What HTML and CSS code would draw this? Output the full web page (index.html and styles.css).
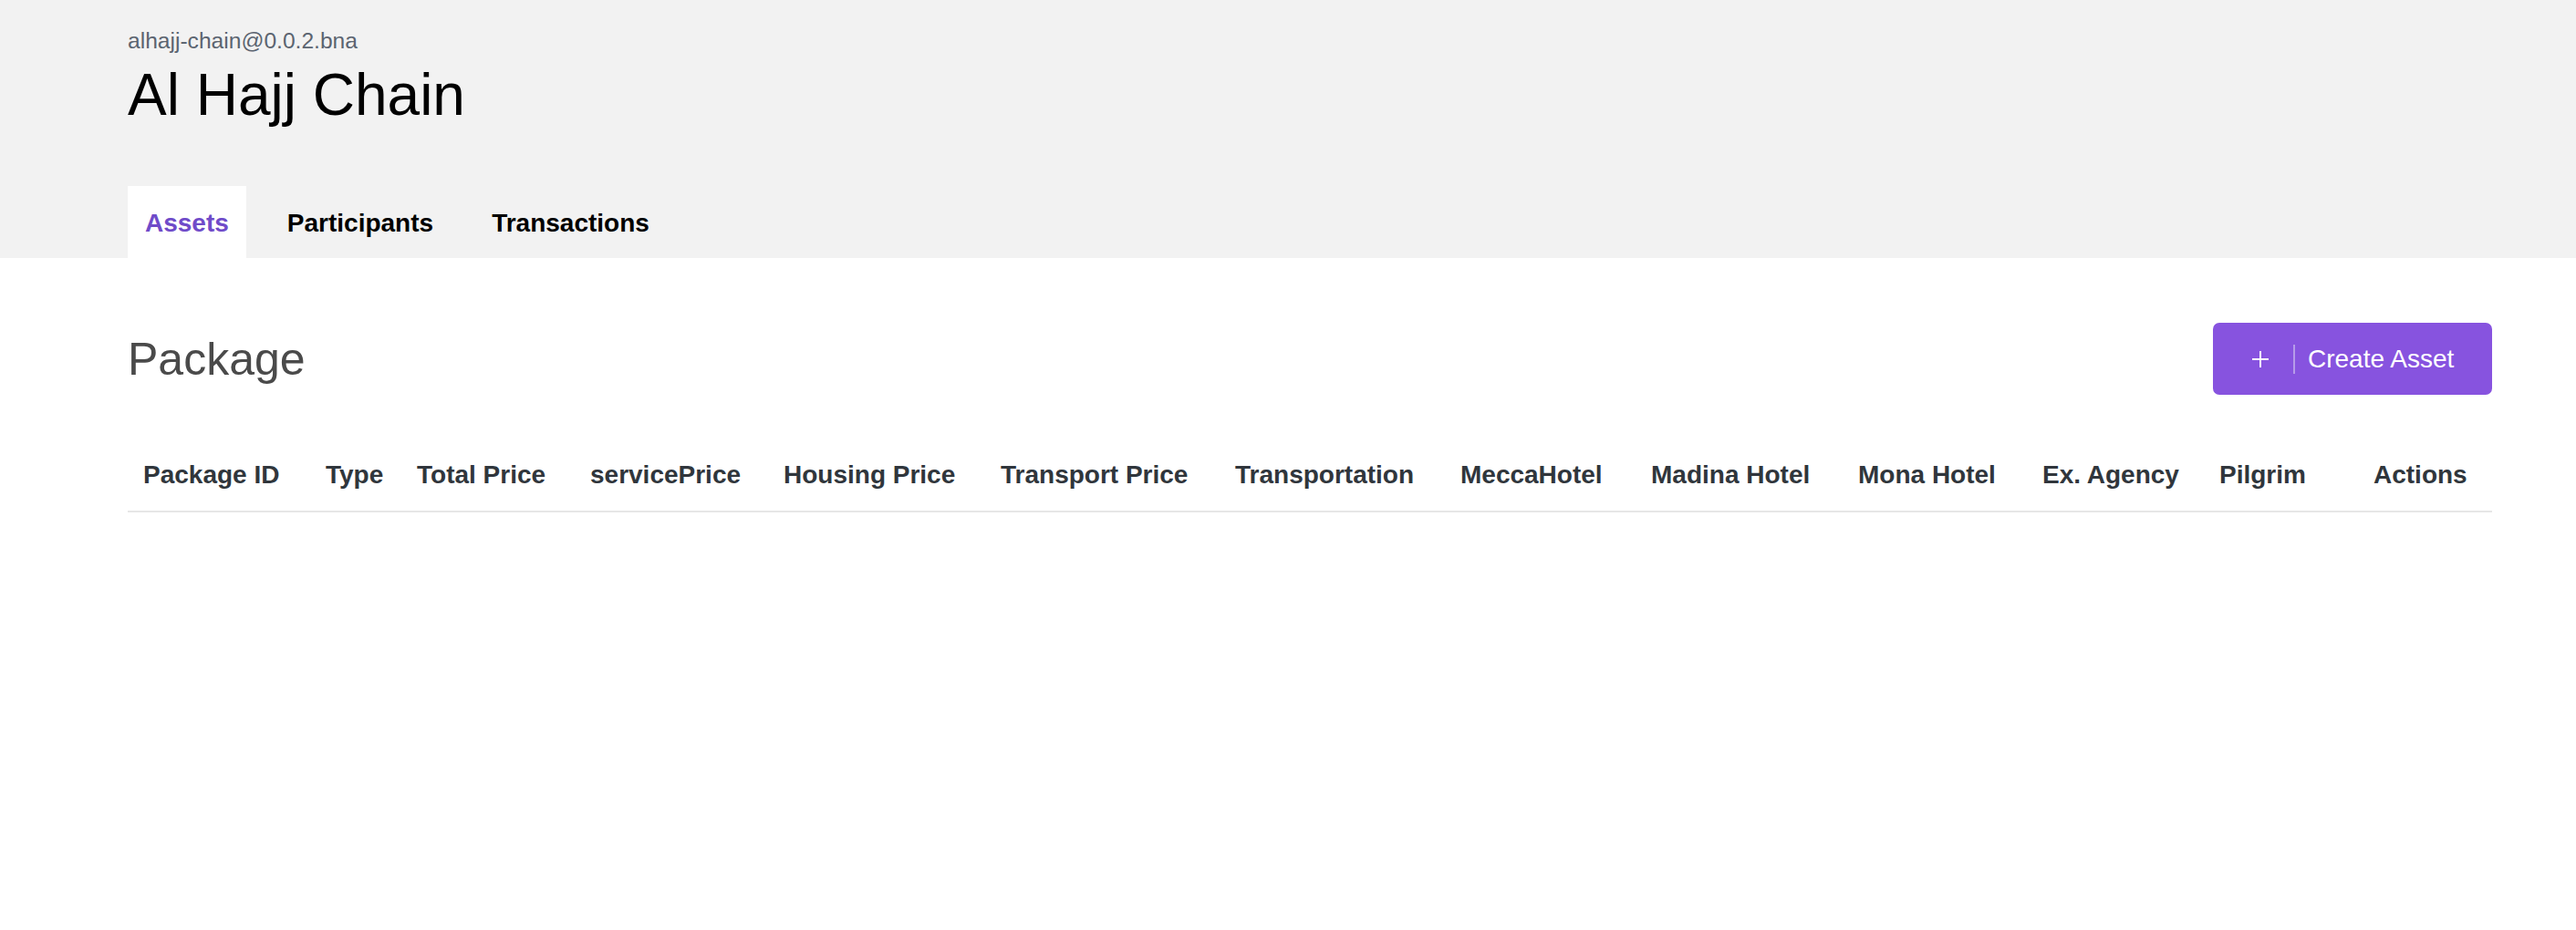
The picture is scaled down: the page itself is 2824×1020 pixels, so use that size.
FILE: index.html
```html
<!DOCTYPE html>
<html lang="en">
<head>
<meta charset="utf-8">
<title>Al Hajj Chain</title>
<link rel="stylesheet" href="styles.css">
</head>
<body>
<header class="top">
  <div class="top-inner">
    <div class="subtitle">alhajj-chain@0.0.2.bna</div>
    <h1 class="title">Al Hajj Chain</h1>
    <nav class="tabs">
      <a class="tab active">Assets</a>
      <a class="tab">Participants</a>
      <a class="tab">Transactions</a>
    </nav>
  </div>
</header>
<main class="content">
  <div class="heading-row">
    <h2 class="heading">Package</h2>
    <button class="create-btn">
      <svg class="plus" width="20" height="20" viewBox="0 0 20 20"><path d="M10 1v18M1 10h18" stroke="#fff" stroke-width="2" fill="none"/></svg>
      <span class="divider"></span>
      <span class="btn-label">Create Asset</span>
    </button>
  </div>
  <table class="grid">
    <thead>
      <tr>
        <th>Package ID</th>
        <th>Type</th>
        <th>Total Price</th>
        <th>servicePrice</th>
        <th>Housing Price</th>
        <th>Transport Price</th>
        <th>Transportation</th>
        <th>MeccaHotel</th>
        <th>Madina Hotel</th>
        <th>Mona Hotel</th>
        <th>Ex. Agency</th>
        <th>Pilgrim</th>
        <th>Actions</th>
      </tr>
    </thead>
    <tbody></tbody>
  </table>
</main>
</body>
</html>
```
FILE: styles.css
```css
html, body {
  margin: 0;
  padding: 0;
  background: #ffffff;
  font-family: "Liberation Sans", Arial, Helvetica, sans-serif;
}

.top {
  background: #f2f2f2;
}

.top-inner {
  padding: 31px 92px 0 140px;
}

.subtitle {
  font-size: 24.6px;
  line-height: 28px;
  color: #5b6470;
}

.title {
  margin: 7px 0 0 0;
  font-size: 64px;
  line-height: 76px;
  font-weight: normal;
  color: #000;
}

.tabs {
  display: flex;
  gap: 26px;
  margin-top: 62px;
}

.tab {
  display: block;
  height: 79px;
  box-sizing: border-box;
  padding: 4px 19px 0 19px;
  line-height: 73px;
  font-size: 28px;
  font-weight: bold;
  color: #000;
}

.tab.active {
  background: #ffffff;
  color: #6f4bc9;
}

.content {
  padding: 71px 92px 0 140px;
}

.heading-row {
  display: flex;
  align-items: center;
  justify-content: space-between;
  height: 79px;
}

.heading {
  margin: 0;
  font-size: 50px;
  font-weight: normal;
  color: #4a4a4a;
}

.create-btn {
  display: flex;
  align-items: center;
  height: 79px;
  width: 306px;
  box-sizing: border-box;
  padding: 0 0 0 42px;
  border: none;
  border-radius: 7px;
  background: #8753df;
  color: #fff;
  font-family: "Liberation Sans", Arial, Helvetica, sans-serif;
  font-size: 28px;
}

.plus {
  display: block;
}

.divider {
  display: block;
  width: 2px;
  height: 32px;
  margin: 0 14px 0 26px;
  background: #b69be9;
}

.btn-label {
  line-height: 32px;
}

.grid {
  margin-top: 45px;
  width: 100%;
  border-collapse: collapse;
  table-layout: fixed;
}

.grid th {
  box-sizing: border-box;
  text-align: left;
  font-size: 28px;
  line-height: 32px;
  font-weight: bold;
  color: #30363c;
  padding: 27px 0 23px 17px;
  border-bottom: 2px solid #e6e6e6;
  white-space: nowrap;
}

.grid th:nth-child(1) { width: 200px; }
.grid th:nth-child(2) { width: 100px; }
.grid th:nth-child(3) { width: 190px; }
.grid th:nth-child(4) { width: 212px; }
.grid th:nth-child(5) { width: 238px; }
.grid th:nth-child(6) { width: 257px; }
.grid th:nth-child(7) { width: 247px; }
.grid th:nth-child(8) { width: 209px; }
.grid th:nth-child(9) { width: 227px; }
.grid th:nth-child(10) { width: 202px; }
.grid th:nth-child(11) { width: 194px; }
.grid th:nth-child(12) { width: 169px; }
.grid th:nth-child(13) { width: 147px; }
```
